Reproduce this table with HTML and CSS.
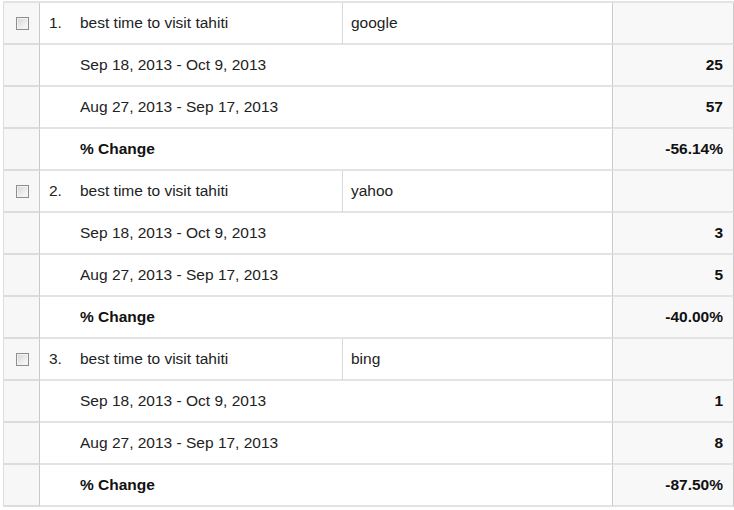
FILE: index.html
```html
<!DOCTYPE html>
<html>
<head>
<meta charset="utf-8">
<link rel="stylesheet" href="styles.css">
</head>
<body>
<div class="grid">
  <div class="c chk"><span class="box"></span></div>
  <div class="c num">1.</div>
  <div class="c kw">best time to visit tahiti</div>
  <div class="c src">google</div>
  <div class="c val"></div>

  <div class="c chk"></div>
  <div class="c num"></div>
  <div class="c date">Sep 18, 2013 - Oct 9, 2013</div>
  <div class="c val b">25</div>

  <div class="c chk"></div>
  <div class="c num"></div>
  <div class="c date">Aug 27, 2013 - Sep 17, 2013</div>
  <div class="c val b">57</div>

  <div class="c chk"></div>
  <div class="c num"></div>
  <div class="c date b">% Change</div>
  <div class="c val b">-56.14%</div>

  <div class="c chk"><span class="box"></span></div>
  <div class="c num">2.</div>
  <div class="c kw">best time to visit tahiti</div>
  <div class="c src">yahoo</div>
  <div class="c val"></div>

  <div class="c chk"></div>
  <div class="c num"></div>
  <div class="c date">Sep 18, 2013 - Oct 9, 2013</div>
  <div class="c val b">3</div>

  <div class="c chk"></div>
  <div class="c num"></div>
  <div class="c date">Aug 27, 2013 - Sep 17, 2013</div>
  <div class="c val b">5</div>

  <div class="c chk"></div>
  <div class="c num"></div>
  <div class="c date b">% Change</div>
  <div class="c val b">-40.00%</div>

  <div class="c chk"><span class="box"></span></div>
  <div class="c num">3.</div>
  <div class="c kw">best time to visit tahiti</div>
  <div class="c src">bing</div>
  <div class="c val"></div>

  <div class="c chk"></div>
  <div class="c num"></div>
  <div class="c date">Sep 18, 2013 - Oct 9, 2013</div>
  <div class="c val b">1</div>

  <div class="c chk"></div>
  <div class="c num"></div>
  <div class="c date">Aug 27, 2013 - Sep 17, 2013</div>
  <div class="c val b">8</div>

  <div class="c chk"></div>
  <div class="c num"></div>
  <div class="c date b">% Change</div>
  <div class="c val b">-87.50%</div>
</div>
</body>
</html>
```

FILE: styles.css
```css
html, body {
  margin: 0;
  padding: 0;
  background: #ffffff;
}

body {
  font-family: "Liberation Sans", Arial, sans-serif;
  font-size: 15.5px;
  color: #222222;
}

.grid {
  margin: 1px 0 0 3px;
  width: 731px;
  display: grid;
  grid-template-columns: 37px 30px 273px 270px 121px;
  grid-auto-rows: 42px;
  border-top: 2px solid #e3e3e3;
}

.c {
  box-sizing: border-box;
  border-bottom: 2px solid #e3e3e3;
  display: flex;
  align-items: center;
  white-space: nowrap;
  min-width: 0;
}

.chk {
  background: #f7f7f7;
  border-left: 1px solid #dedede;
  border-right: 1px solid #cacaca;
  border-bottom-color: #dcdcdc;
  justify-content: center;
}

.box {
  width: 13px;
  height: 13px;
  box-sizing: border-box;
  border: 1px solid #8e8e8e;
  background: linear-gradient(135deg, #d4d4d4 0%, #ececec 55%, #fbfbfb 100%);
  box-shadow: inset 0 0 0 1px #f2f2f2;
  margin-left: 1px;
}

.num {
  padding-left: 9px;
}

.kw {
  padding-left: 10px;
  border-right: 1px solid #d8d8d8;
}

.src {
  padding-left: 8px;
  border-right: 1px solid #cacaca;
}

.date {
  grid-column: span 2;
  padding-left: 10px;
  border-right: 1px solid #cacaca;
}

.val {
  background: #f8f8f8;
  border-right: 1px solid #cacaca;
  justify-content: flex-end;
  padding-right: 10px;
}

.b {
  font-weight: bold;
  color: #111111;
}
```
